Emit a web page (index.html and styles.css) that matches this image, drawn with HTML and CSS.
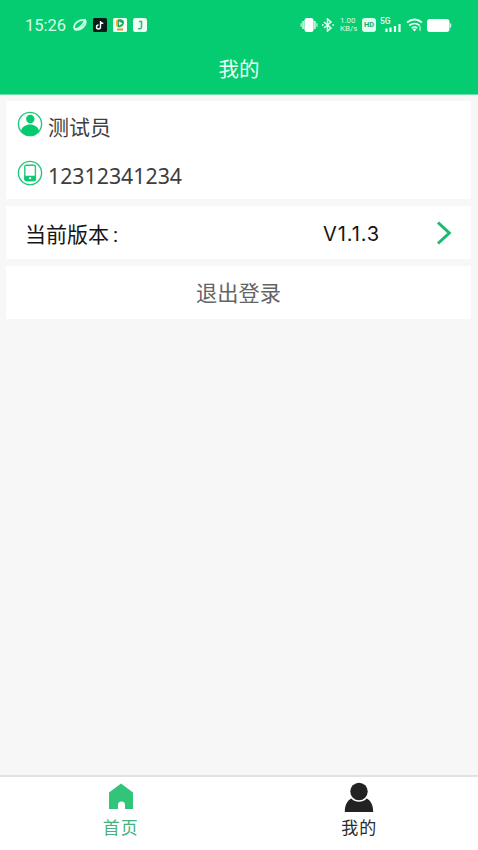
FILE: index.html
```html
<!DOCTYPE html>
<html lang="zh-CN">
<head>
<meta charset="utf-8">
<title>我的</title>
<link rel="stylesheet" href="styles.css">
</head>
<body>
<div class="app">
  <header class="header">
    <div class="status">
      <div class="status-left">
        <span class="time">15:26</span>
        <svg class="leaf" width="16" height="16" viewBox="0 0 16 16"><path d="M3 12.500C0 8 6 2 13 3c2.500 4-4 11.500-10 9.500zM3 12.500C7 11.500 11 8 13 3" fill="none" stroke="#c9ffe3" stroke-width="1.900"/></svg>
        <svg width="14" height="14" viewBox="0 0 14 14"><rect width="14" height="14" rx="1.500" fill="#071b17"/><path d="M7.500 3v6a2 2 0 1 1-2-2M7.500 3c.3 1.700 1.300 2.300 2.800 2.500" fill="none" stroke="#fff" stroke-width="1.400"/></svg>
        <svg width="14" height="14" viewBox="0 0 14 14"><rect width="14" height="14" rx="1.500" fill="#f2fff2"/><path d="M3 2.500 6 1v9L3 8z" fill="#f1aa28"/><path d="M5 1.500c5-1 7 2 5.500 5C9 9 7 9.500 5 9z" fill="#1cab62"/><path d="m6 3.500 3.500 2L6 7.500z" fill="#fff"/><path d="M4 11.500h6" stroke="#ee8b35" stroke-width="2"/></svg>
        <svg width="14" height="14" viewBox="0 0 14 14"><rect width="14" height="14" rx="2.500" fill="#effff5"/><path d="M6 3.500h2.500V9c0 1.500-1.500 2-3.500 1.500" fill="none" stroke="#35bd79" stroke-width="1.600"/></svg>
      </div>
      <div class="status-right">
        <svg width="18" height="16" viewBox="0 0 18 16"><rect x="4.500" y="1" width="9" height="14" rx="2.500" fill="#fff"/><path d="M3.300 4v8M14.700 4v8" stroke="#b9f5d5" stroke-width="2.200"/><path d="M1.200 6.200v3.600M16.800 6.200v3.600" stroke="#8eeabb" stroke-width="1.800"/></svg>
        <svg class="bt" width="12" height="14" viewBox="0 0 12 14"><path d="m2 4 7 6-3.500 3V1L9 4l-7 6" fill="none" stroke="#effff6" stroke-width="1.500"/><path d="M.8 6v2M11.200 6v2" stroke="#effff6" stroke-width="1.300"/></svg>
        <div class="speed"><span>1.00</span><span>KB/s</span></div>
        <div class="hd">HD</div>
        <div class="signal"><span>5G</span><svg width="16" height="8" viewBox="0 0 16 8"><path d="M1.500 8V4.500M5.500 8V3.500M10 8V2M14.500 8V0" stroke="#effff6" stroke-width="2.200"/></svg></div>
        <svg class="wifi" width="17" height="14" viewBox="0 0 17 14"><path d="M1 4.500q7.500-6 15 0M3.300 7.500q5.200-4 10.400 0M5.700 10q2.800-2 5.600 0" fill="none" stroke="#effff6" stroke-width="1.700"/><path d="m6.500 11 2 2.500 2-2.500q-2-1.200-4 0z" fill="#fff"/><path d="M14 8v5" stroke="#9decc6" stroke-width="1.500"/></svg>
        <svg class="battery" width="25" height="13" viewBox="0 0 25 13"><rect width="22.500" height="13" rx="3" fill="#fff"/><path d="M23.500 4.500v4" stroke="#c4f7dd" stroke-width="1.500"/></svg>
      </div>
    </div>
    <h1 class="title">我的</h1>
  </header>
  <main class="content">
    <section class="card profile">
      <div class="info">
        <svg class="info-icon" width="26" height="26" viewBox="0 0 26 26"><circle cx="13" cy="13" r="11.600" fill="#fff" stroke="#20c87b" stroke-width="1.400"/><circle cx="13.300" cy="8" r="4.200" fill="#05cb6f"/><path d="M4 20.200c1.500-8.800 16.500-8.800 18 0-4.500 6-13.500 6-18 0z" fill="#05cb6f"/></svg>
        <span class="name">测试员</span>
      </div>
      <div class="info phone">
        <svg class="info-icon" width="26" height="26" viewBox="0 0 26 26"><circle cx="13" cy="13" r="11.600" fill="#fff" stroke="#20c87b" stroke-width="1.400"/><rect x="7.800" y="5.300" width="10.600" height="15.200" rx="1.500" fill="#fff" stroke="#20c87b" stroke-width="1.400"/><path d="M7.500 15.700h11.200v3.600q0 2-2 2H9.500q-2 0-2-2z" fill="#10c774"/><circle cx="13.100" cy="18.100" r="1.200" fill="#fff"/></svg>
        <span class="number">12312341234</span>
      </div>
    </section>
    <section class="card version">
      <span class="version-label">当前版本<span class="colon">:</span></span>
      <span class="version-value">V1.1.3</span>
      <svg class="chevron" width="16" height="24" viewBox="0 0 16 24"><path d="M2 1.500 13.300 12 2 22.500" fill="none" stroke="#1abb70" stroke-width="3"/></svg>
    </section>
    <section class="card logout">退出登录</section>
  </main>
  <nav class="tabs">
    <div class="tab home">
      <svg width="26" height="28" viewBox="0 0 26 28"><path d="M13 .5 25 9.500V26h-8v-4a3.500 3.500 0 0 0-7 0v4H1V9.500z" fill="#32c47b"/></svg>
      <span>首页</span>
    </div>
    <div class="tab mine">
      <svg width="30" height="30" viewBox="0 0 30 30"><circle cx="15" cy="9.500" r="8.700" fill="#222"/><path d="M.8 30c0-7 2.400-11.300 6.400-13.500 4.400 4.400 11.200 4.400 15.600 0 4 2.200 6.400 6.500 6.400 13.500z" fill="#222"/></svg>
      <span>我的</span>
    </div>
  </nav>
</div>
</body>
</html>
```
FILE: styles.css
```css
* { box-sizing: border-box; }
body { margin: 0; font-family: Roboto, "Noto Sans CJK SC", sans-serif; }
.app { width: 478px; height: 850px; display: flex; flex-direction: column; background: #f7f7f7; overflow: hidden; }
.header { height: 95px; flex: none; background: #05cc70; color: #e9fff4; border-bottom: 1px solid #69ddaa; }
.status { height: 50px; display: flex; justify-content: space-between; padding: 0 26px 0 25px; }
.status-left, .status-right { display: flex; align-items: center; }
.status-left { gap: 6px; }
.time { width: 41px; font-size: 16.5px; color: #d5ffe9; }
.leaf { margin-right: -1px; }
.bt { margin-left: 4px; }
.speed { width: 18px; margin-left: 6px; display: flex; flex-direction: column; font-size: 8px; line-height: 8px; color: #d5ffe9; white-space: nowrap; }
.hd { width: 14px; height: 14px; margin-left: 4px; border-radius: 3px; background: #dcfff0; color: #1fac6b; font-size: 7.5px; font-weight: 700; line-height: 14px; text-align: center; }
.signal { width: 21px; height: 16px; margin-left: 4px; display: flex; flex-direction: column; font-size: 8.5px; font-weight: 500; line-height: 8px; }
.signal svg { align-self: flex-end; margin-top: -1px; }
.wifi { margin-left: 5px; }
.battery { margin-left: 4px; }
.title { margin: 8px 0 0; font-size: 20.5px; font-weight: 400; line-height: 24px; text-align: center; }
.content { flex: 1; padding: 6px 7px 0 6px; display: flex; flex-direction: column; gap: 7px; }
.card { background: #fff; }
.profile { height: 98px; color: #3e3e3e; }
.info { height: 49px; padding-left: 11px; display: flex; gap: 5px; font-size: 21px; line-height: 49px; }
.name { padding-top: 3px; }
.info-icon { margin-top: 10px; }
.number { font-family: "Noto Sans", "Noto Sans CJK SC", sans-serif; font-size: 21.3px; padding-top: 1px; }
.version { height: 53px; display: flex; align-items: center; color: #151515; font-size: 21px; }
.version-label { width: 297px; padding-left: 19px; }
.colon { margin-left: 4px; }
.version-value { width: 133px; padding: 2px 0 0 20px; font-family: Inter, sans-serif; font-size: 20px; letter-spacing: 0.9px; }
.logout { height: 53px; padding-top: 1px; color: #646464; font-size: 21.2px; line-height: 53px; text-align: center; }
.tabs { height: 75px; flex: none; display: flex; background: #fff; border-top: 2px solid #e2e2e2; }
.tab { flex: 1; display: flex; flex-direction: column; align-items: center; font-size: 17px; line-height: 24px; letter-spacing: 1px; }
.tab span { font-family: KaiTi, STKaiti, "Noto Sans CJK SC", sans-serif; }
.home { padding: 6px 0 0 2px; color: #45b27b; }
.home span { margin-top: 4px; }
.mine { padding: 5px 0 0 1px; color: #2c2c2c; }
.mine span { margin-top: 3px; }
```
